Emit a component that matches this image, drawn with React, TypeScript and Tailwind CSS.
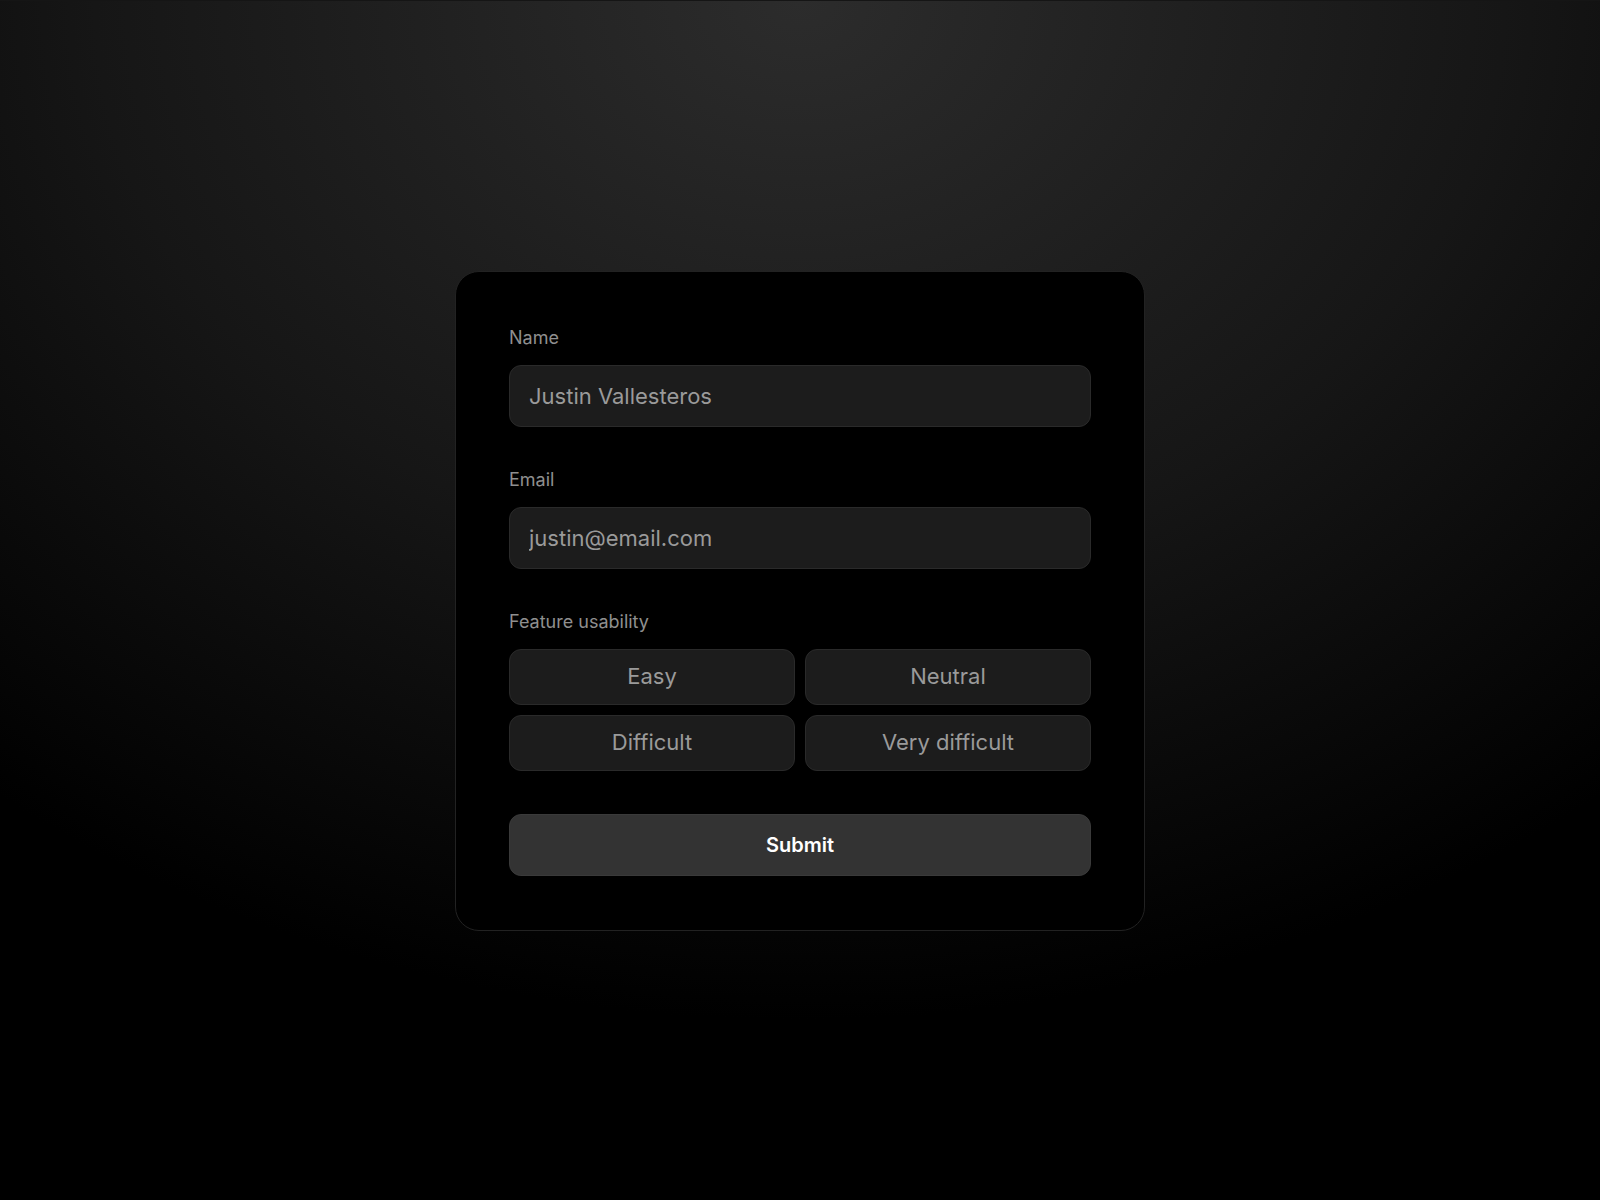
import React, { useState } from 'react';

const options = ['Easy', 'Neutral', 'Difficult', 'Very difficult'];

const Field = ({ label, value, type }: { label: string; value: string; type: string }) => (
  <label className="block">
    <span className="block text-[18px] leading-[22px] text-[#8f8f8f] mb-4">{label}</span>
    <input
      type={type}
      defaultValue={value}
      className="w-full h-[62px] rounded-xl border border-[#2a2a2a] bg-[#1c1c1c] px-[19px] text-[22px] text-[#9a9a9a] outline-none"
    />
  </label>
);

export default function App() {
  const [picked, setPicked] = useState<string | null>(null);

  return (
    <div
      className="min-h-screen w-full flex items-center justify-center bg-black bg-[radial-gradient(ellipse_80%_85%_at_50%_0%,#2c2c2c_0%,#161616_55%,#000_100%)] border-t border-[#151515]"
      style={{ fontFamily: 'Inter, "Noto Sans", sans-serif' }}
    >
      <form
        onSubmit={(e) => e.preventDefault()}
        className="w-[690px] rounded-3xl border border-[#222] bg-black px-[53px] pt-[55px] pb-[54px]"
      >
        <Field label="Name" value="Justin Vallesteros" type="text" />
        <div className="h-[42px]" />
        <Field label="Email" value="justin@email.com" type="email" />

        <div className="mt-[42px]">
          <span className="block text-[18px] leading-[22px] text-[#8f8f8f] mb-4">Feature usability</span>
          <div className="grid grid-cols-2 gap-[10px]">
            {options.map((o) => (
              <button
                key={o}
                type="button"
                onClick={() => setPicked(o)}
                className={`h-14 rounded-xl border border-[#2a2a2a] bg-[#1c1c1c] text-[22px] ${
                  picked === o ? 'text-white' : 'text-[#9a9a9a]'
                }`}
              >
                {o}
              </button>
            ))}
          </div>
        </div>

        <button
          type="submit"
          className="mt-[43px] w-full h-[62px] rounded-xl border border-[#3a3a3a] bg-[#333] text-[20px] font-semibold text-white"
        >
          Submit
        </button>
      </form>
    </div>
  );
}
